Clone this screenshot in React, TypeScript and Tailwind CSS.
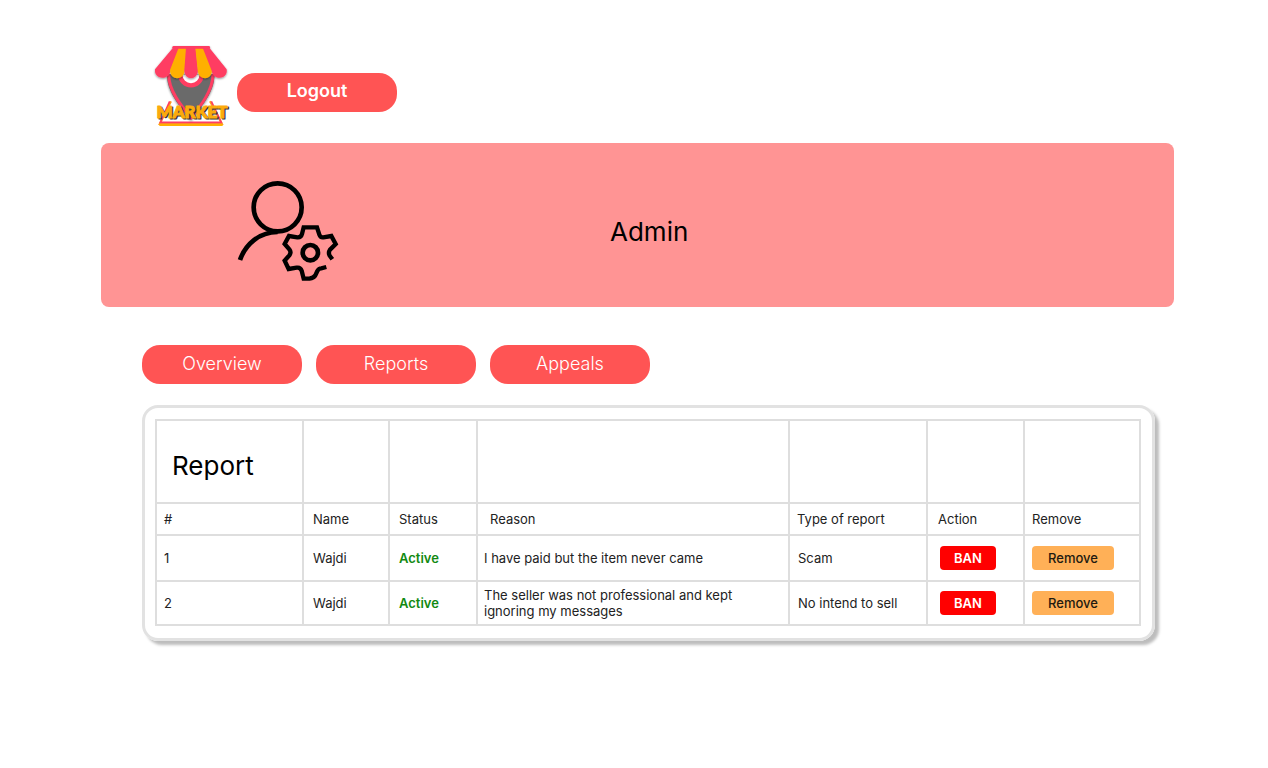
import React from "react";

const reports = [
  { id: 1, name: "Wajdi", status: "Active", reason: "I have paid but the item never came", type: "Scam" },
  {
    id: 2,
    name: "Wajdi",
    status: "Active",
    reason: "The seller was not professional and kept ignoring my messages",
    type: "No intend to sell",
  },
];

function MarketLogo() {
  return (
    <svg viewBox="24 27 228 249" className="h-[83px] w-[76px] shrink-0 overflow-visible" role="img" aria-label="Market">
      <defs>
        <filter id="soft" x="-10%" y="-10%" width="120%" height="125%">
          <feDropShadow dx="0" dy="3" stdDeviation="2.5" floodColor="#000" floodOpacity="0.45" />
        </filter>
        <clipPath id="pin">
          <path d="M66 118 H208 C211 170 170 215 138 256 C104 215 64 170 66 118Z" />
        </clipPath>
      </defs>
      <path d="M78 199 L44 267 H231 L195 199" fill="none" stroke="#ff9d1c" strokeWidth="6" />
      <path d="M74 199 L46 262 H229 L199 199" fill="none" stroke="#ff3d62" strokeWidth="5" />
      <path d="M43 270 H233" stroke="#ffb000" strokeWidth="6" />
      <g filter="url(#soft)">
        <path d="M66 118 H208 C211 170 170 215 138 256 C104 215 64 170 66 118Z" fill="#6b6b6b" />
        <path d="M71 118 C70 165 108 212 138 248 C168 212 204 165 204 118" fill="none" stroke="#ff3d62" strokeWidth="9" />
      </g>
      <g clipPath="url(#pin)">
        <circle cx="138" cy="119" r="32" fill="#fff" stroke="#ff3d62" strokeWidth="13" />
      </g>
      <g filter="url(#soft)">
        <path d="M84 38 L30 103 C26 134 72 138 76 107 L105 38Z" fill="#ff3d62" />
        <path d="M101 38 L75 105 C75 138 118 138 119 105 L126 38Z" fill="#ffb000" />
        <path d="M123 38 L118 105 C118 138 158 138 159 105 L152 38Z" fill="#ff3d62" />
        <path d="M151 38 L158 105 C160 138 201 138 201 105 L176 38Z" fill="#ffb000" />
        <path d="M173 38 L200 107 C205 138 250 134 245 103 L193 38Z" fill="#ff3d62" />
        <path d="M86 37 H191" stroke="#ff3d62" strokeWidth="8" strokeLinecap="round" />
      </g>
      <g fontFamily="Lato, sans-serif" fontWeight="900" fontSize="51" textAnchor="middle" strokeWidth="3" strokeLinejoin="round">
        <text x="145" y="252" fill="#333" stroke="#333" aria-hidden="true">MARKET</text>
        <text x="141" y="248" fill="#fcab0c" stroke="#fcab0c">MARKET</text>
      </g>
    </svg>
  );
}

function AdminIcon() {
  return (
    <svg viewBox="36 30 306 306" className="size-[102px]" fill="none" stroke="#000" strokeWidth="14" aria-hidden="true">
      <circle cx="158" cy="109" r="72" />
      <path d="M45 267 C61 220 103 183 158 183" />
      <circle cx="256" cy="245" r="23" />
      <path
        strokeWidth="13"
        d="M322 265 L314 254 Q309 245 315 236 L332 219 L319 195 L295 199 Q286 200 283 191 L276 169 H236 L231 189 Q228 200 217 199 L192 195 L179 219 L193 235 Q200 244 193 253 L179 269 L191 294 L215 290 Q226 288 230 299 L236 323 H253 Q267 321 271 313 L277 300 Q281 292 289 292 L304 288"
      />
    </svg>
  );
}

const pill =
  "flex h-[39px] w-40 cursor-pointer items-center justify-center rounded-[18px] bg-[#ff5454] pb-[2px] text-lg text-white";
const cell = "border-2 border-[#dedede] text-left align-middle font-normal leading-4";

export default function App() {
  return (
    <div className="min-h-screen bg-white pt-11 pr-[94px] pb-16 pl-[101px] font-[Inter,sans-serif] text-black">
      <header className="flex items-center gap-2 pl-[52px]">
        <MarketLogo />
        <button type="button" className={`${pill} mt-[13px] font-semibold`}>
          Logout
        </button>
      </header>

      <main>
        <section className="mt-4 grid h-[164px] grid-cols-[509fr_564fr] items-center rounded-lg bg-[#ff9494] pt-[14px]">
          <div className="pl-[136px]">
            <AdminIcon />
          </div>
          <h1 className="text-[26px] leading-8">Admin</h1>
        </section>

        <nav className="mt-[38px] flex gap-[14px] pl-[41px]">
          <button type="button" className={`${pill} font-light`}>Overview</button>
          <button type="button" className={`${pill} font-light`}>Reports</button>
          <button type="button" className={`${pill} font-light`}>Appeals</button>
        </nav>

        <section className="mt-[21px] mr-[19px] ml-[41px] rounded-2xl border-3 border-[#e2e2e2] pt-[11px] pr-[11px] pb-3 pl-[10px] shadow-[4px_4px_3px_#bdbdbd]">
          <table className="w-full table-fixed border-collapse text-[13px] text-[#222]">
            <colgroup>
              <col className="w-[147px]" />
              <col className="w-[86px]" />
              <col className="w-[88px]" />
              <col />
              <col className="w-[138px]" />
              <col className="w-[97px]" />
              <col className="w-[116px]" />
            </colgroup>
            <thead>
              <tr className="h-[83px]">
                <th className={`${cell} pt-2 pl-[15px]`}>
                  <h2 className="text-[26px] leading-8 text-black">Report</h2>
                </th>
                <td className={cell} />
                <td className={cell} />
                <td className={cell} />
                <td className={cell} />
                <td className={cell} />
                <td className={cell} />
              </tr>
              <tr className="h-8">
                <th scope="col" className={`${cell} pl-[7px]`}>#</th>
                <th scope="col" className={`${cell} pl-[9px]`}>Name</th>
                <th scope="col" className={`${cell} pl-[9px]`}>Status</th>
                <th scope="col" className={`${cell} pl-3`}>Reason</th>
                <th scope="col" className={`${cell} pl-[7px]`}>Type of report</th>
                <th scope="col" className={`${cell} pl-[10px]`}>Action</th>
                <th scope="col" className={`${cell} pl-[7px]`}>Remove</th>
              </tr>
            </thead>
            <tbody>
              {reports.map((r) => (
                <tr key={r.id} className="h-[46px] last:h-11">
                  <td className={`${cell} pl-[7px]`}>{r.id}</td>
                  <td className={`${cell} pl-[9px]`}>{r.name}</td>
                  <td className={`${cell} pl-[9px]`}>
                    <span className="font-semibold text-[#128a12]">{r.status}</span>
                  </td>
                  <td className={`${cell} pr-10 pl-[6px]`}>{r.reason}</td>
                  <td className={`${cell} pl-[8px]`}>{r.type}</td>
                  <td className={`${cell} pl-[12px]`}>
                    <button
                      type="button"
                      className="flex h-6 w-14 cursor-pointer items-center justify-center rounded bg-[#ff0000] font-semibold text-white"
                    >
                      BAN
                    </button>
                  </td>
                  <td className={`${cell} pl-[7px]`}>
                    <button
                      type="button"
                      className="flex h-6 w-[82px] cursor-pointer items-center justify-center rounded bg-[#ffb057] font-medium text-[#221a10]"
                    >
                      Remove
                    </button>
                  </td>
                </tr>
              ))}
            </tbody>
          </table>
        </section>
      </main>
    </div>
  );
}
